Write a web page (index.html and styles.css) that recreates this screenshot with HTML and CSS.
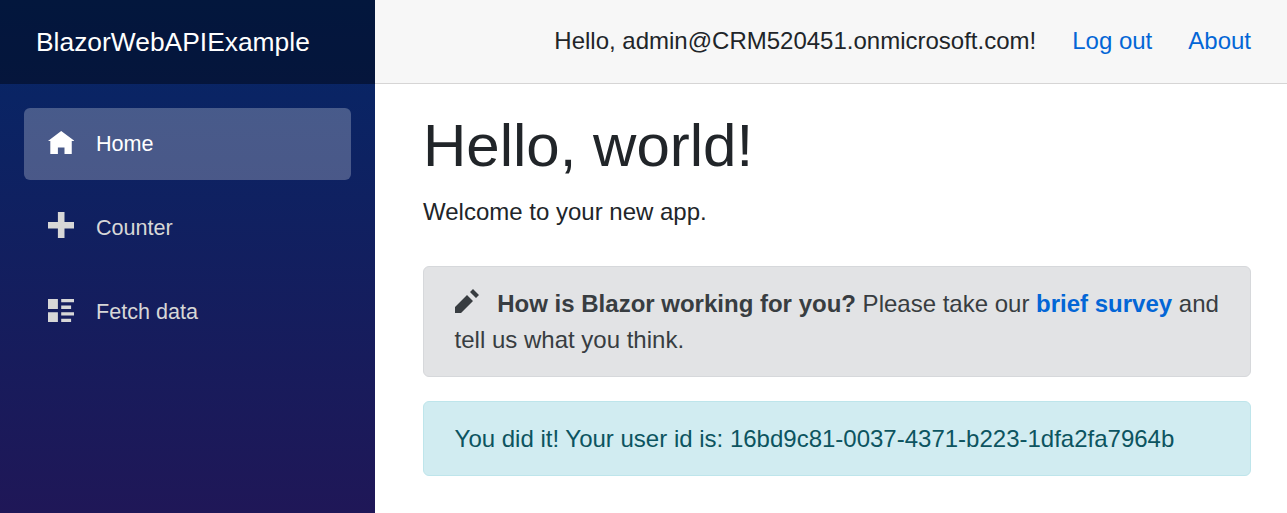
FILE: index.html
```html
<!DOCTYPE html>
<html lang="en">
<head>
<meta charset="utf-8">
<title>BlazorWebAPIExample</title>
<link rel="stylesheet" href="styles.css">
</head>
<body>
<div class="page">
  <aside class="sidebar">
    <header class="brand-row"><a class="brand">BlazorWebAPIExample</a></header>
    <nav class="nav">
      <a class="nav-link active"><svg class="icon" viewBox="0 0 8 8"><path d="M4 0l-4 3h.7v4h2.3v-2h2v2h2.2v-4h.8z"/></svg>Home</a>
      <a class="nav-link"><svg class="icon icon-plus" viewBox="0 0 8 8"><path d="M3 0v3h-3v2h3v3h2v-3h3v-2h-3v-3z"/></svg>Counter</a>
      <a class="nav-link"><svg class="icon" viewBox="0 0 8 8"><path d="M0 0v3h3v-3zm4 0v1h4v-1zm0 2v1h3v-1zm-4 2v3h3v-3zm4 0v1h4v-1zm0 2v1h3v-1z"/></svg>Fetch data</a>
    </nav>
  </aside>
  <div class="main">
    <header class="top-row">
      <span>Hello, admin@CRM520451.onmicrosoft.com!</span>
      <a class="link">Log out</a>
      <a class="link">About</a>
    </header>
    <main class="content">
      <h1>Hello, world!</h1>
      <p class="intro">Welcome to your new app.</p>
      <div class="alert survey"><svg class="pencil" viewBox="0 0 8 8"><path d="M6 0l-1 1 2 2 1-1zm-2 2l-4 4v2h2l4-4z"/></svg> <strong>How is Blazor working for you?</strong> Please take our <a class="link strong">brief survey</a> and tell us what you think.</div>
      <div class="alert info">You did it! Your user id is: 16bd9c81-0037-4371-b223-1dfa2fa7964b</div>
    </main>
  </div>
</div>
</body>
</html>
```
FILE: styles.css
```css
* { box-sizing: border-box; }

body {
  margin: 0;
  background: #fff;
  color: #212529;
  font: 24px/36px "Liberation Sans", Arial, sans-serif;
}

.page {
  display: flex;
  height: 513px;
  overflow: hidden;
}

.sidebar {
  width: 375px;
  flex: none;
  background: linear-gradient(180deg, #052767 0, #3a0647 1045px);
}

.brand-row {
  display: flex;
  align-items: center;
  height: 84px;
  padding-left: 36px;
  background: rgba(0, 0, 0, 0.4);
}

.brand {
  color: #fff;
  font-size: 26.4px;
}

.nav {
  display: flex;
  flex-direction: column;
  gap: 12px;
  padding: 24px;
}

.nav-link {
  display: flex;
  height: 72px;
  padding-left: 24px;
  border-radius: 6px;
  color: #d7d7d7;
  font-size: 21.6px;
  line-height: 72px;
}

.nav-link.active {
  background: rgba(255, 255, 255, 0.25);
  color: #fff;
}

.icon {
  width: 26.4px;
  height: 26.4px;
  margin: 23px 21.6px 0 0;
  fill: currentColor;
}

.icon-plus { margin-top: 20px; }

.main {
  flex: 1;
  min-width: 0;
}

.top-row {
  display: flex;
  align-items: center;
  justify-content: flex-end;
  gap: 36px;
  height: 84px;
  padding: 0 36px 2px 0;
  border-bottom: 1px solid #d6d5d5;
  background: #f7f7f7;
}

.link { color: #0366d6; }

.strong { font-weight: bold; }

.content { padding: 26.4px 36px 0 48px; }

h1 {
  margin: 0 0 12px;
  font-size: 60px;
  font-weight: 500;
  line-height: 72px;
}

.intro { margin: 0 0 36px; }

.alert {
  margin-bottom: 24px;
  padding: 18.5px 30px 18.5px 30.6px;
  border: 1px solid;
  border-radius: 6px;
}

.survey {
  border-color: #d6d8db;
  background: #e2e3e5;
  color: #383d41;
}

.info {
  border-color: #bee5eb;
  background: #d1ecf1;
  color: #0c5460;
}

.pencil {
  width: 24px;
  height: 24px;
  margin-right: 12px;
  fill: currentColor;
  vertical-align: -1px;
}
```
